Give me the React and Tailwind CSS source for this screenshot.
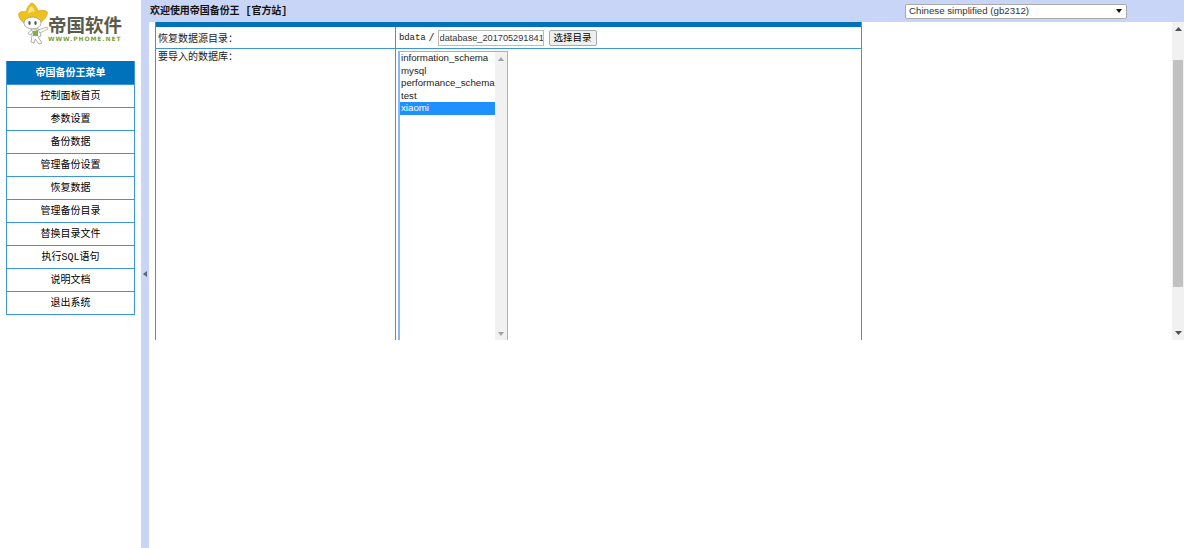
const MENU = ['控制面板首页', '参数设置', '备份数据', '管理备份设置', '恢复数据', '管理备份目录', '替换目录文件', '执行SQL语句', '说明文档', '退出系统'];
const DBS = ['information_schema', 'mysql', 'performance_schema', 'test', 'xiaomi'];

const cn = 'font-["Liberation_Mono","Noto_Sans_CJK_SC",monospace] text-[10px]';

const Logo = () => (
  <div className="relative h-[46px] w-[108px]">
    <svg width="34" height="44" viewBox="0 0 34 44" className="absolute left-0 top-0">
      {/* hat */}
      <path d="M0.5 12 C2 9 5 9 8 10 C9 6 11 2 14 1 C17 2 19 6 20 9 C23 8 27 8 29.5 10 C29 15 26 18 23 20 C18 15 10 15 6 21 C3 19 1 16 0.5 12 Z" fill="#f0c01c" stroke="#c9980f" strokeWidth="0.6" />
      <path d="M12 5 C14 4 16 6 17 10 C14 9 12 10 10 12 C10 9 11 7 12 5 Z" fill="#fbe792" />
      {/* face */}
      <ellipse cx="14.5" cy="21" rx="8.5" ry="6" fill="#fff" stroke="#8f8f84" strokeWidth="0.7" />
      <ellipse cx="11.5" cy="21" rx="1.2" ry="1.9" fill="#555" />
      <ellipse cx="17.5" cy="21" rx="1.2" ry="1.9" fill="#555" />
      {/* body and arms */}
      <path d="M13 27 L21 27 L23 34 L20 35 L24 41 L21 42 L17 37 L16 41 L13 40 L14 34 Z" fill="#fff" stroke="#8f8f84" strokeWidth="0.7" />
      <path d="M20 28 L29 25 L30 27 L22 31 Z" fill="#fff" stroke="#8f8f84" strokeWidth="0.6" />
      <path d="M14 28 L10 31 L11 33 L15 31 Z" fill="#fff" stroke="#8f8f84" strokeWidth="0.6" />
      <path d="M15 29 L20 28 L20 34 L15 34 Z" fill="#7fb045" />
    </svg>
    <div className='absolute left-[30px] top-[13px] whitespace-nowrap font-["Noto_Sans_CJK_SC",sans-serif] text-[18.5px] font-bold leading-[18px] text-[#5b5b4b]'>帝国软件</div>
    <div className='absolute left-[30px] top-[34px] whitespace-nowrap font-["DejaVu_Sans",sans-serif] text-[6px] font-bold leading-[6px] tracking-[0.9px] text-[#7d9f3c]'>WWW.PHOME.NET</div>
  </div>
);

const Sidebar = () => (
  <aside className="w-[141px] shrink-0 bg-white">
    <div className="h-[61px] pl-[18px] pt-[2px]">
      <Logo />
    </div>
    <div className={`ml-[6px] w-[129px] border-x border-b border-[#3d96dc] ${cn} text-black`}>
      <div className="flex h-[23px] items-center justify-center bg-[#0072bc] pt-[1px] font-bold text-white">帝国备份王菜单</div>
      {MENU.map((m) => (
        <div key={m} className="flex h-[23px] items-center justify-center border-t border-[#3d96dc] first:border-t-0">{m}</div>
      ))}
    </div>
  </aside>
);

const ListBox = () => (
  <div className="mt-[2px] ml-[2px] flex h-[320px] w-[110px] border border-l-2 border-[#8db8ee] bg-white">
    <div className='w-[95px] font-["Liberation_Sans",sans-serif] text-[9.7px] text-[#222]'>
      {DBS.map((d) => (
        <div key={d} className={`h-[12.5px] whitespace-nowrap pl-[1px] leading-[12px] ${d === 'xiaomi' ? 'bg-[#1e90ff] text-white' : ''}`}>{d}</div>
      ))}
    </div>
    <div className="flex h-[288px] w-[12px] flex-col items-center justify-between bg-[#f1f1f1] pt-[5px] pb-[4px]">
      <svg width="6" height="4" viewBox="0 0 6 4"><path d="M3 0 L6 4 L0 4 Z" fill="#a3a3a3" /></svg>
      <svg width="6" height="4" viewBox="0 0 6 4"><path d="M0 0 L6 0 L3 4 Z" fill="#a3a3a3" /></svg>
    </div>
  </div>
);

const Scrollbar = () => (
  <div className="flex h-full w-[12px] shrink-0 flex-col items-center bg-[#f1f1f1] pt-[5px]">
    <svg width="7" height="4" viewBox="0 0 7 4"><path d="M3.5 0 L7 4 L0 4 Z" fill="#505050" /></svg>
    <div className="mt-[29px] h-[227px] w-[10px] bg-[#c1c1c1]" />
    <svg className="mt-[44px]" width="7" height="4" viewBox="0 0 7 4"><path d="M0 0 L7 0 L3.5 4 Z" fill="#505050" /></svg>
  </div>
);

const Content = () => (
  <div className="flex h-[318px] flex-1 overflow-hidden bg-white">
    <div className="flex-1 pl-[6px]">
      <div className="h-full w-[707px] overflow-hidden border-x border-[#3d96dc]">
        <div className="h-[5px] bg-[#0072bc]" />
        <div className={`flex h-[22px] border-b border-[#3d96dc] ${cn} text-[#222]`}>
          <div className="flex w-[240px] items-center border-r border-[#3d96dc] pl-[2px] pt-[3px]">恢复数据源目录：</div>
          <div className="flex items-center pl-[3px] pt-[1px]">
            <span className="pt-[2px] text-[9px] tracking-[-0.1px]">bdata</span>
            <span className="ml-[3px] mr-[3px] pt-[1px]">/</span>
            <input readOnly value="database_201705291841" className='h-[16px] w-[106px] border border-[#bbb] pl-[1px] font-["Liberation_Sans",sans-serif] text-[9.2px] text-[#333] outline-none' />
            <button className="ml-[5px] h-[16px] w-[48px] rounded-[2px] border border-[#aaa] bg-[#efefef] pt-[2px] text-[9.5px] leading-[12px] text-black">选择目录</button>
          </div>
        </div>
        <div className={`flex h-full ${cn} text-[#222]`}>
          <div className="w-[240px] border-r border-[#3d96dc] pl-[2px] pt-[2px] leading-[14px]">要导入的数据库：</div>
          <ListBox />
        </div>
      </div>
    </div>
    <Scrollbar />
  </div>
);

export default function App() {
  return (
    <div className="flex h-[548px] w-[1184px] overflow-hidden bg-white">
      <Sidebar />
      <div className="flex flex-1 flex-col">
        <header className="flex h-[22px] shrink-0 items-center bg-[#c8d5f6] pl-[9px]">
          <div className={`${cn} pt-[1px] font-bold tracking-[-0.05px] text-[#111]`}>欢迎使用帝国备份王 [官方站]</div>
          <div className='ml-auto mr-[57px] flex h-[15px] w-[222px] items-center justify-between rounded-[2px] border border-[#aaa] bg-white pl-[3px] pr-[4px] font-["Liberation_Sans",sans-serif] text-[9.7px] text-[#333]'>
            <span>Chinese simplified (gb2312)</span>
            <svg width="6" height="4" viewBox="0 0 6 4"><path d="M0 0 L6 0 L3 4 Z" fill="#111" /></svg>
          </div>
        </header>
        <div className="flex min-h-0 flex-1">
          <div className="flex w-[8px] shrink-0 items-center justify-center bg-[#c8d5f6] pb-[22px]">
            <svg width="4" height="6" viewBox="0 0 4 6"><path d="M4 0 L4 6 L0 3 Z" fill="#5a6478" /></svg>
          </div>
          <div className="flex-1">
            <Content />
          </div>
        </div>
      </div>
    </div>
  );
}
